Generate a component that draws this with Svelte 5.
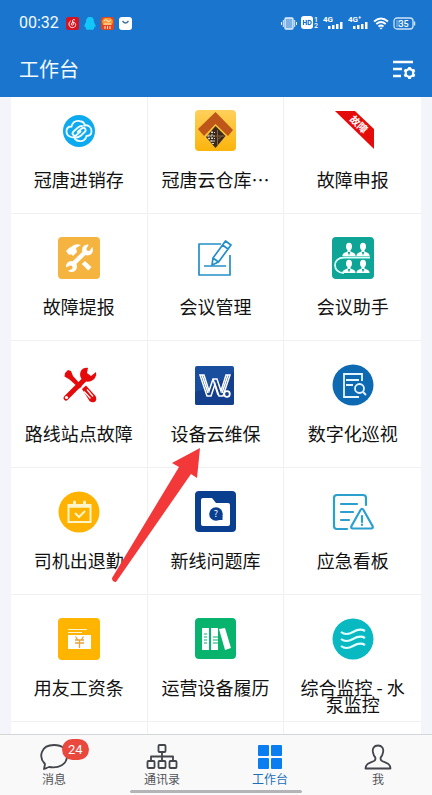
<script>
  let activeTab = $state("workbench");

  const apps = [
    { icon: "cloud", label: "冠唐进销存" },
    { icon: "warehouse", label: "冠唐云仓库…" },
    { icon: "ribbon", label: "故障申报" },
    { icon: "repair", label: "故障提报" },
    { icon: "note", label: "会议管理" },
    { icon: "people", label: "会议助手" },
    { icon: "tools", label: "路线站点故障" },
    { icon: "w", label: "设备云维保" },
    { icon: "inspect", label: "数字化巡视" },
    { icon: "calendar", label: "司机出退勤" },
    { icon: "folder", label: "新线问题库" },
    { icon: "alert", label: "应急看板" },
    { icon: "salary", label: "用友工资条" },
    { icon: "books", label: "运营设备履历" },
    { icon: "water", label: "综合监控 - 水泵监控" },
    { icon: "", label: "" },
    { icon: "", label: "" },
    { icon: "", label: "" },
  ];

  const tabs = [
    { id: "messages", label: "消息", badge: 24 },
    { id: "contacts", label: "通讯录" },
    { id: "workbench", label: "工作台" },
    { id: "me", label: "我" },
  ];
</script>

{#snippet person(x, y)}
  <g transform="translate({x} {y})" fill="#fff">
    <ellipse cx="0" cy="-2.500" rx="3" ry="3.800" />
    <path d="M-1.500 0h3v2.500l3.500 1.500q1.600.8 1.600 3H-6.600q0-2.200 1.600-3l3.500-1.500z" />
    <path d="M-1.300 3 0 6.500 1.300 3z" fill="#0ea596" />
  </g>
{/snippet}

{#snippet signal(label)}
  <svg width="21" height="14" viewBox="0 0 21 14" fill="#fff">
    <text x="0" y="6" font-size="8" font-weight="700">{label}</text>
    <path d="M5 10h2.500v3H5zM9 9h2.500v4H9zM13 8h2.500v5H13zM17 6h2.500v7H17z" />
  </svg>
{/snippet}

<div class="screen">
  <header>
    <div class="status">
      <span class="time">00:32</span>
      <div class="notices">
        <svg width="13" height="13" viewBox="0 0 13 13">
          <rect width="13" height="13" rx="2" fill="#d8121f" />
          <path d="M8.800 3C7.500 2 6.300 2.800 6.600 4l.7 3c.2 1.500-2 1.700-2 .2C5.300 5.500 7 5 8.400 5.600c2.200 1 1.500 5-1.900 5C2.500 10.600 2 5.500 4.700 4" fill="none" stroke="#fff" />
        </svg>
        <svg width="12" height="13" viewBox="0 0 12 13">
          <path d="M6 0c3 0 4 2 4 5 1 2 2 3.500 1.500 5-.5.8-1-.2-1.500-.5 0 1 .5 1.500 0 2.500-1 1-3 1-4 .5-1 .5-3 .5-4-.5-.5-1 0-1.500 0-2.500-.5.300-1 1.300-1.500.5C0 8.500 1 7 2 5c0-3 1-5 4-5z" fill="#12c7f8" />
        </svg>
        <svg width="13" height="13" viewBox="0 0 13 13">
          <rect width="13" height="13" rx="2" fill="#e2451d" />
          <path d="M1 4q2-4 5-3 4-1 6 3l-1 4H2z" fill="#f79a38" />
          <path d="M3 4q1-2 3-1l1 2 3-2M3 7h7M4 9v3M6.500 9v3M9 9v3" fill="none" stroke="#ffe9c9" />
        </svg>
        <svg width="13" height="13" viewBox="0 0 13 13">
          <rect width="13" height="13" rx="3" fill="#fff" />
          <path d="M3.500 4q3 4 6 0" fill="none" stroke="#47749c" stroke-width="1.300" />
        </svg>
      </div>
      <div class="indicators">
        <svg width="16" height="13" viewBox="0 0 16 13" fill="none" stroke="#e5f1fc">
          <rect x="4" y="1" width="8" height="11" rx="1" fill="#7fb1e4" stroke-width="1.300" />
          <path d="M2.300 3v7M.5 5v3M13.700 3v7M15.500 5v3" />
        </svg>
        <svg width="18" height="16" viewBox="0 -1 18 16" fill="#fff">
          <rect width="12" height="13" rx="3" />
          <path d="M2.500 4v5M5.300 4v5M2.500 6.500h2.800M7.200 4.500v4q3 .3 3-2t-3-2z" fill="none" stroke="#1975cd" stroke-width="1.200" />
          <text x="13" y="6" font-size="7" font-weight="500">1</text>
          <text x="13" y="12" font-size="7" font-weight="500">2</text>
        </svg>
        {@render signal("4G")}
        {@render signal("4G⁺")}
        <svg width="16" height="13" viewBox="0 0 16 13" fill="none" stroke="#fff" stroke-width="1.800">
          <path d="M1 4.500q7-6 14 0M3.300 7q4.700-4 9.400 0M5.500 9.500q2.500-2 5 0" />
          <path d="M6.300 10.800h3.400L8 12.600z" fill="#fff" stroke="none" />
        </svg>
        <svg width="23" height="13" viewBox="0 0 23 13">
          <rect x="1" y="1" width="19" height="11" rx="3" fill="none" stroke="#cfe4f8" stroke-width="1.300" />
          <path d="M3 3h4v7H3z" fill="#5b9cdd" />
          <path d="M21.500 4.500v4" stroke="#cfe4f8" stroke-width="1.500" />
          <text x="5.500" y="9.800" font-size="9" font-weight="500" fill="#fff">35</text>
        </svg>
      </div>
    </div>
    <div class="title-bar">
      <h1>工作台</h1>
      <button class="settings" aria-label="设置">
        <svg width="24" height="22" viewBox="0 0 24 22" fill="none" stroke="#fff">
          <path d="M1 3h20M1 10h9M1 17h8" stroke-width="2.400" />
          <circle cx="17.500" cy="14" r="3.800" stroke-width="2.200" />
          <path d="M17.500 8v2M17.500 18v2M12.300 11l1.800 1M20.900 16l1.800 1M12.300 17l1.800-1M20.900 12l1.800-1" stroke-width="2.800" />
        </svg>
      </button>
    </div>
  </header>

  <main>
    <ul class="apps">
      {#each apps as app}
        <li>
          {#if app.label}
            <button class="app">
              <svg width="42" height="42" viewBox="0 0 42 42" fill="none" aria-hidden="true">
                {#if app.icon === "cloud"}
                  <circle cx="21" cy="21" r="16" fill="#0eaaf0" />
                  <g stroke="#f1fbff" stroke-width="1.800" stroke-linecap="round">
                    <path d="M17 27c-4 1-8.500-1-8.500-5.500 0-3 2-5 5-5 1-4 4-6 8-5.500 3 .3 5 2 5.500 4.500" />
                    <path d="M26 15.500c4-1 7.500 1.500 7.500 5.500 0 3-2 5-5 5-1 4-4 5.500-7.500 5-3-.4-4.500-2-5-4.500" />
                    <path d="M24 16c-2 0-3 .6-4 1.500l-4.500 4c-2.500 2.500.5 5.500 3 3.500l4-3.500M18 27.500c2.500 0 3.500-.7 5-2l3.700-3.500c2.500-2.500-.5-5.500-3-3.500l-4 3.500" />
                  </g>
                {:else if app.icon === "warehouse"}
                  <defs>
                    <linearGradient id="gold" x2="0" y2="1">
                      <stop stop-color="#ffd05c" />
                      <stop offset="1" stop-color="#fbb40b" />
                    </linearGradient>
                  </defs>
                  <rect x="1" width="41" height="41" rx="4" fill="url(#gold)" />
                  <path d="M4 19 21.500 2 39 20l-5 6L21.500 14 10 26z" fill="#bd5618" />
                  <path d="m21.500 16 10 10-10 12L12 27z" fill="#382a20" />
                  <path d="M13 26h8M14 28.500h7M16 31h5M18 33.500h3M17 22.500h4M15 24.500v6M18 21v12" stroke="#e1d5bd" stroke-dasharray="2 1" />
                  <path d="M23.500 20v15M21.500 26h9M23 30l5-4" stroke="#8a6238" />
                {:else if app.icon === "ribbon"}
                  <path d="M3 1h20l19 18v20z" fill="#e60b0b" />
                  <text x="27" y="18" font-size="10" font-weight="700" text-anchor="middle" fill="#fff" transform="rotate(44 27 14)">故障</text>
                {:else if app.icon === "repair"}
                  <rect width="42" height="42" rx="4" fill="#f5b440" />
                  <path d="m8 14 3-3 2-1q4-4 10-2l-5 3 1 4-4 4q-2-3-4-1zM27 24l6.500 6-3.200 3.500-6.500-6.500z" fill="#fff" />
                  <path d="M13 29 29.500 13" stroke="#fff" stroke-width="4.500" />
                  <circle cx="13.500" cy="29.500" r="5.500" fill="#fff" />
                  <circle cx="29.500" cy="13" r="5.500" fill="#fff" />
                  <path d="M12.500 30.500 7 33M30.500 12 34 6" stroke="#f5b440" stroke-width="4" stroke-linecap="round" />
                {:else if app.icon === "note"}
                  <g stroke="#238fc8" stroke-width="1.700" stroke-linejoin="round">
                    <path d="M27 7H5v31h31V18M10 29h22" />
                    <path d="m19 21 12.500-17 5.500 4-12.500 17-6.500 3zM19 21l5.500 4M28.500 8l5.500 4" />
                  </g>
                {:else if app.icon === "people"}
                  <rect width="42" height="42" rx="4" fill="#0ea596" />
                  {@render person(17, 12)}
                  {@render person(31, 12)}
                  {@render person(17, 29)}
                  {@render person(31, 29)}
                  <path d="M38 20.500H12c-12 0-12 15.500 0 15.500" stroke="#d8fff8" stroke-width="1.800" />
                {:else if app.icon === "tools"}
                  <path d="m7 9 3-3 3 1 2 5 9 10-2.500 2.500-10-9-5-3z" fill="#e60b0b" />
                  <path d="m8 34 19-19" stroke="#e60b0b" stroke-width="5" stroke-linecap="round" />
                  <path d="M30 4c-6-1-9 4-7.500 9 2 6 11 6 14.500 1q2-3 1-6l-5 4-4-3z" fill="#e60b0b" />
                  <circle cx="8.500" cy="33.500" r="1.600" fill="#fff" />
                  <path d="m24 25 4-3.500L37.500 32q2 4-1 6-3 1-5-1z" fill="#e60b0b" />
                  <path d="m26 27.500 6.500 7M29 25.500l6 7" stroke="#fff" stroke-width="1.200" />
                {:else if app.icon === "w"}
                  <rect x="1" y="2" width="39" height="39" rx="2" fill="#194e9f" />
                  <path d="M1 28q20-5 39-20v31q0 2-2 2H3q-2 0-2-2z" fill="#143f8c" />
                  <g stroke="#fff" stroke-width="1.500">
                    <path d="M6 11h4l5 16 4-12h4l4 12 5-16h4l-7 21h-4l-4-12-4 12h-4z" />
                    <path d="m8 11 6 18M34 11l-6 18M19 15l5 16" />
                    <circle cx="33" cy="30" r="2.800" fill="#143f8c" stroke-width="1.800" />
                  </g>
                {:else if app.icon === "inspect"}
                  <circle cx="21" cy="21" r="20.500" fill="#0d69b2" />
                  <g stroke="#e6f5ff" stroke-width="1.800">
                    <path d="M30 17v-7H12v23h15M14 16h13M14 21h7" />
                    <circle cx="27.500" cy="24.500" r="4.500" />
                    <path d="m31 28 3 3" />
                  </g>
                {:else if app.icon === "calendar"}
                  <circle cx="21" cy="21" r="20.500" fill="#ffb200" />
                  <g stroke="#fff5c8" stroke-width="2">
                    <path d="M10.500 14h22v17h-22z" />
                    <path d="M10 15h23" stroke-width="3.500" />
                    <path d="m17 22 4 4 6-6" />
                    <path d="M16.500 11v3M26.500 11v3" stroke-width="3" stroke-linecap="round" />
                  </g>
                {:else if app.icon === "folder"}
                  <rect x="1" width="41" height="41" rx="4" fill="#0a3e8e" />
                  <path d="M9 7h9l4 5h12q2 0 2 2v19q0 2-2 2H9q-2 0-2-2V9q0-2 2-2z" fill="#fff" />
                  <circle cx="22" cy="23" r="6.800" fill="#0a3e8e" />
                  <path d="M26 25h2.500v4H22z" fill="#0a3e8e" />
                  <text x="22" y="26" font-size="9" text-anchor="middle" fill="#fff">?</text>
                {:else if app.icon === "alert"}
                  <g stroke="#2b9fcd" stroke-width="2.200" stroke-linecap="round" stroke-linejoin="round">
                    <path d="M34 14V7q0-3-3-3H5Q2 4 2 7v28q0 3 3 3h10M9 13h16M9 21h12M9 29h8" />
                    <path d="M28.500 19q1.500-2.500 3 0l9 16q1 2.500-1.500 2.500H21q-2.500 0-1.500-2.500zM30 25v6M30 33.500v.5" />
                  </g>
                {:else if app.icon === "salary"}
                  <rect width="42" height="42" rx="4" fill="#ffb400" />
                  <path d="M10 17h23v14H10z" fill="#fff" />
                  <path d="M10 11.500h19M10 14.500h14" stroke="#fff5d0" />
                  <path d="m17.500 18.500 2 3M25.500 18.500l-2 3M17 22h9M17 25h9M21.500 22v8" stroke="#e5a33a" stroke-width="1.300" />
                {:else if app.icon === "books"}
                  <rect x="1" width="41" height="41" rx="4" fill="#08b46d" />
                  <path d="M8 10h7v22H8zM17 10h7v22h-7zM25 11l6-1 6 20-6 2z" fill="#fff" />
                  <path d="M10 16h3M10 19h3M10 22h3M10 25h3M19 19h5M19 22h5M19 25h5" stroke="#08b46d" stroke-width="1.200" />
                {:else if app.icon === "water"}
                  <circle cx="21" cy="21" r="20.500" fill="#09b9c1" />
                  {#each [14, 21, 28] as y}
                    <path d="M9 {y}q5 4 12 0t12-1" stroke="#e2ffff" stroke-width="2.200" />
                  {/each}
                {/if}
              </svg>
              <span>{app.label}</span>
            </button>
          {/if}
        </li>
      {/each}
    </ul>
    <!-- hint arrow pointing at 设备云维保 -->
    <svg class="arrow" width="90" height="136" viewBox="0 0 90 136" aria-hidden="true">
      <path d="m89 1-28 15 7 4L1 131q0 4 4 4L80 27l6 4z" fill="#f23839" />
    </svg>
  </main>

  <nav>
    {#each tabs as tab}
      <button
        class="tab"
        class:active={activeTab === tab.id}
        onclick={() => (activeTab = tab.id)}
      >
        <svg width="32" height="26" viewBox="0 0 32 26" fill="none" stroke="#43454a" stroke-width="1.800" stroke-linejoin="round" aria-hidden="true">
          {#if tab.id === "messages"}
            <path d="M16 1c8 0 13 4 13 11 0 8-8 13-18 11-2 .6-3 1.500-5 2l1-5C0 13 3 1 16 1z" />
          {:else if tab.id === "contacts"}
            <g>
              <rect x="12.500" y="1" width="7" height="7" rx="1" />
              <rect x="1.500" y="17" width="7" height="7" rx="1" />
              <rect x="12.500" y="17" width="7" height="7" rx="1" />
              <rect x="23.500" y="17" width="7" height="7" rx="1" />
              <path d="M16 8v9M5 17v-4.500h22V17" />
            </g>
          {:else if tab.id === "workbench"}
            <g class="tiles" stroke="none">
              <rect x="4" y="1" width="11" height="11" rx="1" />
              <rect x="17" y="1" width="11" height="11" rx="1" />
              <rect x="4" y="14" width="11" height="11" rx="1" />
              <rect x="17" y="14" width="11" height="11" rx="1" />
            </g>
          {:else}
            <path d="M16 1.500c4 0 6 3 5 7-.4 2-1 3.500-2 4.500-1 2-.5 3 1 4 4 2 8 2 8.500 7.500h-25C4 19 8 19 12 17c1.500-1 2-2 1-4-1-1-1.600-2.500-2-4.500-1-4 1-7 5-7z" />
          {/if}
        </svg>
        {#if tab.badge}
          <span class="badge">{tab.badge}</span>
        {/if}
        <span>{tab.label}</span>
      </button>
    {/each}
    <div class="home-indicator"></div>
  </nav>
</div>

<style>
  :global(body) {
    margin: 0;
  }

  .screen {
    display: flex;
    flex-direction: column;
    height: 100vh;
    overflow: hidden;
    background: #f4f5fb;
    color: #111;
    font-family: Roboto, "Noto Sans CJK SC", sans-serif;
  }

  button {
    margin: 0;
    border: 0;
    padding: 0;
    background: none;
    color: inherit;
    font-family: inherit;
    cursor: pointer;
  }

  svg {
    display: block;
    flex: none;
  }

  /* Header */
  header {
    position: relative;
    flex: none;
    padding: 12px 16px 12px 19px;
    background: #1975cd;
    color: #f3faff;
  }

  .status {
    display: flex;
    align-items: center;
    height: 22px;
  }

  .time {
    font-size: 16px;
    line-height: 22px;
  }

  .notices {
    display: flex;
    gap: 5px;
    margin-left: 7px;
  }

  .indicators {
    display: flex;
    align-items: center;
    gap: 4px;
    margin-left: auto;
  }

  .title-bar {
    display: flex;
    align-items: center;
    justify-content: space-between;
    margin-top: 20px;
    height: 31px;
  }

  h1 {
    margin: 0;
    font-size: 20px;
    font-weight: 400;
    line-height: 30px;
  }

  /* App grid, scrolled a little below the header */
  main {
    position: relative;
    flex: 1;
    min-height: 0;
    overflow: hidden;
    padding: 0 11px;
  }

  .apps {
    display: grid;
    grid-template-columns: repeat(3, 1fr);
    grid-auto-rows: minmax(127px, auto);
    margin: -10px 0 0;
    padding: 0;
    background: #fff;
    list-style: none;
  }

  li {
    box-sizing: border-box;
    border-right: 1px solid #f0f0f3;
    border-bottom: 1px solid #f0f0f3;
  }

  li:nth-child(3n) {
    border-right: 0;
  }

  .app {
    display: flex;
    flex-direction: column;
    align-items: center;
    gap: 19px;
    width: 100%;
    height: 100%;
    padding: 23px 12px 0;
    font-family: "Noto Sans CJK SC", sans-serif;
    font-size: 18px;
    line-height: 17px;
  }

  .arrow {
    position: absolute;
    top: 350px;
    left: 111px;
    pointer-events: none;
  }

  /* Bottom tabs */
  nav {
    position: relative;
    display: flex;
    flex: none;
    border-top: 1px solid #d5d6da;
    padding-bottom: 6px;
    background: #f9f9fa;
  }

  .tab {
    position: relative;
    display: flex;
    flex: 1;
    flex-direction: column;
    align-items: center;
    gap: 2px;
    padding-top: 9px;
    color: #505257;
    font-size: 12px;
    line-height: 17px;
  }

  .tab.active {
    color: #1c70b8;
  }

  .tiles {
    fill: #43454a;
  }

  .active .tiles {
    fill: #0a7df0;
  }

  .badge {
    position: absolute;
    top: 4px;
    left: 50%;
    margin-left: 8px;
    border-radius: 11px;
    padding: 0 6px;
    background: #e9483d;
    color: #fff;
    font-size: 13px;
    line-height: 21px;
  }

  .home-indicator {
    position: absolute;
    bottom: 2px;
    left: 30%;
    width: 40%;
    height: 3px;
    border-radius: 2px;
    background: #b4b4b6;
  }
</style>
